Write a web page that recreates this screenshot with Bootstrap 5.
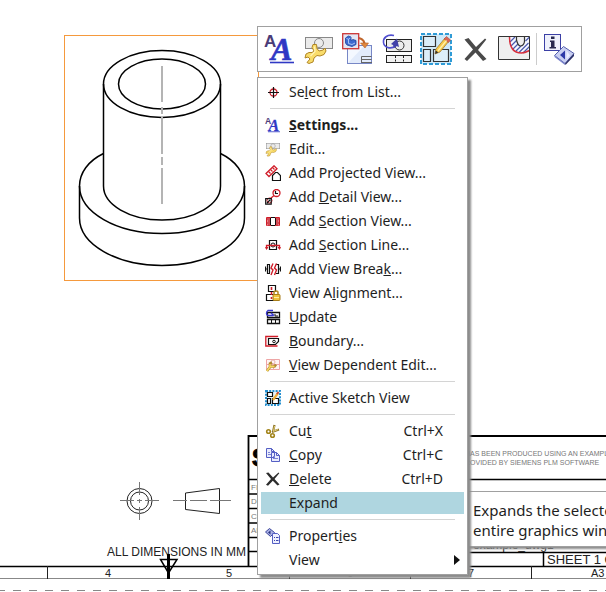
<!DOCTYPE html>
<html lang="en">
<head>
<meta charset="utf-8">
<meta name="viewport" content="width=device-width, initial-scale=1">
<title>Drafting – drawing sheet</title>
<link href="https://cdn.jsdelivr.net/npm/bootstrap@5.3.0/dist/css/bootstrap.min.css" rel="stylesheet">
<style>
  body { font-family: "Noto Sans", "Open Sans", sans-serif; font-size: 14px; line-height: 20px; color: #1e1e1e; background: #fff; }
  .sheet { font-family: "Liberation Sans", Arial, sans-serif; }
  .sheet text { fill: #222; }
  .sheet .faint { fill: #777; }
  /* floating view toolbar */
  .view-tools { left: 257px; top: 26px; padding: 6px; gap: 7px; border: 1px solid #a0a0a0; background: #fff; }
  .view-tools button { width: 32px; height: 32px; }
  .view-tools .vr { margin: 0 -1px; background: #ccc; opacity: 1; }
  /* context menu */
  .view-menu { left: 257px; top: 77px; min-width: 211px; padding: 3px; gap: 2px; font-size: 14px; color: #1e1e1e;
    border: 1px solid #a0a0a0; border-radius: 0; box-shadow: 3px 3px 2px #8c8c8c; }
  .view-menu .dropdown-item { padding: 1px 21px 1px 4px; gap: 8px; color: inherit; line-height: 20px; }
  .view-menu .dropdown-item:hover, .view-menu .dropdown-item.current { background: #afd6e0; color: inherit; }
  .view-menu .dropdown-divider { margin: 3px 9px; border-color: #d4d4d4; opacity: 1; }
  .view-menu .pic { width: 16px; height: 16px; flex: none; }
  .view-menu .has-sub { padding-right: 4px; }
  .hint { left: 465px; top: 491px; width: 210px; padding: 8px 7px 6px; font-size: 15px; border: 1px solid #a0a0a0; background: #fff; white-space: nowrap; box-shadow: 2px 2px 2px #8c8c8c; }
</style>
<script src="https://cdn.jsdelivr.net/npm/bootstrap@5.3.0/dist/js/bootstrap.bundle.min.js"></script>
</head>
<body>
<svg class="d-none" xmlns="http://www.w3.org/2000/svg">
  <defs>
  <symbol id="i-style" viewBox="0 0 32 32">
    <text x="0" y="14" font-family="Liberation Sans" font-weight="bold" font-size="17" fill="#4b3c78">A</text>
    <text x="7" y="27" font-family="Liberation Serif" font-weight="bold" font-style="italic" font-size="32" fill="#2f38c4" stroke="#2f38c4" stroke-width=".6">A</text>
    <path d="M6 29.500H30" stroke="#2f38c4" stroke-width="1.600"/>
  </symbol>
  <symbol id="i-wrench" viewBox="0 0 32 32">
    <rect x="2.500" y="4.500" width="27" height="11" fill="#ebebeb" stroke="#888"/>
    <circle cx="16" cy="10" r="4.500" fill="none" stroke="#888"/>
    <path d="M10 11.500l3.500 0 .5 4 2 2.500 4-1 2-2 1 3-2 3.500-4 1.500-3-.5-3 2.500-1 4-4 1.500-2-1 3-3.500-2-2-3 1 1-4 3-1.500 3 0 2-1.500-2-3.500z" fill="#f9dc6b" stroke="#b08524" stroke-linejoin="round"/>
    <path d="M11.500 13.500l.5 5-4.500 4.500" fill="none" stroke="#fff3b8" stroke-width="1.300"/>
  </symbol>
  <symbol id="i-base" viewBox="0 0 32 32">
    <rect x="5.500" y="12.500" width="24" height="18" fill="#e2ebfb" stroke="#7787c6"/>
    <path d="M6 30V13h16z" fill="#f4f8ff"/>
    <path d="M19.500 29.500V23.500h10M19.500 26.500h10M19 29.500h11" fill="none" stroke="#666"/>
    <path d="M17 5c4 1 6 3 5.500 8" fill="none" stroke="#c0662c" stroke-width="2.200"/>
    <path d="M18.500 10l8 0-3.500 5z" fill="#e0883e" stroke="#b5602a" stroke-width=".6"/>
    <rect x=".7" y=".7" width="16" height="15" fill="#e3e6f3" stroke="#cc3535" stroke-width="1.300"/>
    <path d="M3.500 5l3-2 2.500 1v3.500l2-1 3 1v4l-4 2-5-1.500-1.500-2z" fill="#3d6ad0" stroke="#20429a" stroke-width=".8"/>
    <path d="M4.500 5.500l2 .7 2-1.200M6.500 6v4.500l3.500 1 3-1.500" fill="none" stroke="#a9c2f4"/>
  </symbol>
  <symbol id="i-update" viewBox="0 0 32 32">
    <rect x="5.500" y="6.500" width="25" height="12" fill="#ececec" stroke="#222"/>
    <circle cx="18.500" cy="12.500" r="4.500" fill="none" stroke="#333"/>
    <rect x="5.500" y="22.500" width="25" height="7" fill="#f2f2f2" stroke="#222"/>
    <path d="M14.500 23v7M22.500 23v7" stroke="#222" stroke-dasharray="2 1.500"/>
    <path d="M13 2.500C6 1 2 5 2.500 9.500S9 17 15 13" fill="none" stroke="#504fd0" stroke-width="1.600"/>
    <path d="M10 11l6-5.500 2 8.500-2.500-1-2.500 2-1-3z" fill="#4140a8"/>
  </symbol>
  <symbol id="i-pencil" viewBox="0 0 32 32">
    <path d="M15 21l1-5 9-11 4 3-9 11z" fill="#f7c948" stroke="#a37c32" stroke-width=".8"/>
    <path d="M24 6l2.500-2.500 4 3.500-2 2.500z" fill="#dd6655" stroke="#a94a3d" stroke-width=".6"/>
    <path d="M18 18l8.500-10.500" stroke="#fff0ac" stroke-width="1.300"/>
    <path d="M15 21l.8-3.500 2.500 2z" fill="#333"/>
  </symbol>
  <symbol id="i-sketch" viewBox="0 0 32 32">
    <rect x="1" y="1" width="30" height="30" fill="#cfe9f8" stroke="#2f9bd6" stroke-width="2" stroke-dasharray="4 2"/>
    <path d="M3.500 3.500h12v10h-12zM3.500 16.500h7v12h-7zM13.500 16.500h15v12h-15z" fill="#dceef9" stroke="#333" stroke-width="1.200"/>
    <use href="#i-pencil"/>
  </symbol>
  <symbol id="i-cross" viewBox="0 0 32 32">
    <path d="M5.500 6.500l4-1.500 7.500 9 9-8.500 1.300 1-8.300 10.500L27.500 26l-3.500 2-7.500-8.500-8.500 8.500L5.500 26l8.500-9.500z" fill="#4a4a4a"/>
  </symbol>
  <symbol id="i-breakout" viewBox="0 0 32 32">
    <path d="M.5 3.500h31v23H.5z" fill="#efefef"/>
    <path d="M11.500 4c0 10 4 16 12 16 3 0 5-1 8-2.500V4h-4v4c0 3-2 5-5 5s-5-4-5-9z" fill="#f6f7ff"/>
    <path d="M12 9l5-5M13 13l6-6M15 16l5-5M18 18l5-5M21 19.500l9.500-9.500M25 20l6.500-6.500M27.500 8l4-4" stroke="#4a5aac" stroke-width="1.200"/>
    <path d="M11.500 4c0 10 4 16 12 16 3 0 5-1 8-2.500" fill="none" stroke="#d62f3c" stroke-width="1.500"/>
    <path d="M18.500 4v3c1 4 2 6 4 6s4-2 4-5V4" fill="#efefef" stroke="#333" stroke-width="1.200"/>
    <path d="M.5 3.500h31v23H.5z" fill="none" stroke="#333"/>
  </symbol>
  <symbol id="i-info" viewBox="0 0 32 32">
    <rect x="1.500" y="1.500" width="16" height="16" fill="#eef0fb" stroke="#3b3fa5"/>
    <path d="M7 7.500h4.500V14H13v1.500H6.500V14H8V9H7zM8 3.500h3.500v2.500H8z" fill="#28284e"/>
    <path d="M11.500 22.500l9-9 10.500 7-9 10z" fill="#c9cff2" stroke="#5560ad"/>
    <path d="M22 30.500l9-10v2.500l-8.500 9z" fill="#2c3168"/>
    <path d="M11.500 22.500l10.500 8v1.500L11.500 24z" fill="#7a83cc"/>
    <path d="M22 17.500v9l-5-4.500z" fill="#2c38a8"/>
    <path d="M23.500 17.500v9l3.500-4z" fill="#e9ecff"/>
  </symbol>
  </defs>
</svg>

<main class="position-relative min-vh-100 overflow-hidden">
  <svg class="sheet position-absolute top-0 start-0 w-100 h-100" xmlns="http://www.w3.org/2000/svg" role="img" aria-label="Drawing sheet">
    <rect x="64.500" y="35.500" width="194" height="245" fill="none" stroke="#f5993d"/>
    <g fill="none" stroke="#000" stroke-width="1.500">
      <ellipse cx="162" cy="84" rx="58.500" ry="33.500"/>
      <ellipse cx="162" cy="84" rx="43.500" ry="25"/>
      <path d="M103.500 84V186A58.500 34 0 0 0 220.500 186V84"/>
      <path d="M103.500 153.500C88 161 79.500 173 79.500 186A82.500 47.500 0 0 0 244.500 186C244.500 173 236 161 220.500 153.500"/>
      <path d="M79.500 186V218A82.500 47.500 0 0 0 244.500 218V186"/>
    </g>
    <path d="M162 66V102M162 107V114M162 117V154M162 157V165M162 168V204" stroke="#b4b4b4" stroke-width="2"/>
    <!-- projection symbol -->
    <g fill="none" stroke="#222">
      <circle cx="139.500" cy="501" r="12.500"/>
      <circle cx="139.500" cy="501" r="9"/>
      <path d="M185.500 493L219.500 488.500V513.500L185.500 509.500Z"/>
      <path d="M120 500.500H134M137 500.500H142M145 500.500H159M139.500 482V495M139.500 499V503M139.500 507V520M173 500.500H187M190 500.500H207M210 500.500H231" stroke="#777"/>
    </g>
    <text x="107" y="556" font-size="12">ALL DIMENSIONS IN MM</text>
    <!-- sheet frame -->
    <line x1="0" x2="100%" y1="566.500" y2="566.500" stroke="#000" stroke-width="1.600"/>
    <line x1="0" x2="100%" y1="578.500" y2="578.500" stroke="#888"/>
    <line x1="-3" x2="100%" y1="590.500" y2="590.500" stroke="#888" stroke-dasharray="8 8"/>
    <path d="M47.500 566V579M289.500 566V579M410.500 566V579M531.500 566V579" stroke="#222"/>
    <path d="M168.500 554V579" stroke="#000" stroke-width="3"/>
    <path d="M160.500 559.500H177L168.500 573Z" fill="none" stroke="#000" stroke-width="1.500"/>
    <g font-size="11">
      <text x="105" y="577">4</text><text x="226" y="577">5</text><text x="347" y="577">6</text><text x="468" y="577">7</text><text x="591" y="577">A3</text>
    </g>
    <!-- title block -->
    <path d="M248.500 567V436H606" fill="none" stroke="#000" stroke-width="1.800"/>
    <path d="M248 479.500H606M248 494H300M248 508.500H300M248 523H300M248 537.500H300M248 551.500H300M400 552.500H606M543.500 552V567" stroke="#000" stroke-width="1.500"/>
    <text x="252" y="466" font-size="23" font-weight="bold" stroke="#000" style="fill:#000">S</text>
    <g font-size="8">
      <text class="faint" x="251" y="490">FI</text><text class="faint" x="251" y="504">DR</text><text class="faint" x="251" y="519">CH</text><text class="faint" x="251" y="533">AP</text>
    </g>
    <g font-size="7">
      <text class="faint" x="465" y="456">HAS BEEN PRODUCED USING AN EXAMPLE</text>
      <text class="faint" x="465" y="465">ROVIDED BY SIEMENS PLM SOFTWARE</text>
    </g>
    <text x="473" y="549" font-size="12">example_dwg1</text>
    <text x="547" y="564" font-size="13">SHEET 1 OF</text>
  </svg>

  <div class="view-tools position-absolute d-flex align-items-stretch" role="toolbar" aria-label="View">
    <button type="button" class="btn p-0 border-0 d-flex" aria-label="Settings"><svg width="32" height="32"><use href="#i-style"/></svg></button>
    <button type="button" class="btn p-0 border-0 d-flex" aria-label="Edit"><svg width="32" height="32"><use href="#i-wrench"/></svg></button>
    <button type="button" class="btn p-0 border-0 d-flex" aria-label="Base view"><svg width="32" height="32"><use href="#i-base"/></svg></button>
    <button type="button" class="btn p-0 border-0 d-flex" aria-label="Update"><svg width="32" height="32"><use href="#i-update"/></svg></button>
    <button type="button" class="btn p-0 border-0 d-flex" aria-label="Active sketch view"><svg width="32" height="32"><use href="#i-sketch"/></svg></button>
    <button type="button" class="btn p-0 border-0 d-flex" aria-label="Delete"><svg width="32" height="32"><use href="#i-cross"/></svg></button>
    <button type="button" class="btn p-0 border-0 d-flex" aria-label="Break-out section"><svg width="32" height="32"><use href="#i-breakout"/></svg></button>
    <div class="vr"></div>
    <button type="button" class="btn p-0 border-0 d-flex" aria-label="Information"><svg width="32" height="32"><use href="#i-info"/></svg></button>
  </div>

  <div class="view-menu dropdown-menu show d-flex flex-column">
    <button type="button" class="dropdown-item d-flex align-items-center"><svg class="pic"><circle cx="8.500" cy="8.500" r="3.500" fill="none" stroke="#c8202c" stroke-width="1.300"/><path d="M3 8.500H14M8.500 3V14" stroke="#111" stroke-width="1.200"/></svg><span>Se<u>l</u>ect from List...</span></button>
    <hr class="dropdown-divider">
    <button type="button" class="dropdown-item d-flex align-items-center fw-bold"><svg class="pic"><use href="#i-style"/></svg><span><u>S</u>ettings...</span></button>
    <button type="button" class="dropdown-item d-flex align-items-center"><svg class="pic"><use href="#i-wrench"/></svg><span>Edit...</span></button>
    <button type="button" class="dropdown-item d-flex align-items-center"><svg class="pic" fill="none"><path d="M1 8.500L9 .8l3 3L4 11.500z" fill="#fff" stroke="#d01c28" stroke-width="1.300"/><path d="M3.500 6.500l2 2M5.500 4.500l2 2M7.500 2.500l2 2" stroke="#d01c28" stroke-width="1.200"/><path d="M7.500 15.500v-5l3-3h2l3 3v5z" fill="#fff" stroke="#111" stroke-width="1.200"/></svg><span>Add Pro<u>j</u>ected View...</span></button>
    <button type="button" class="dropdown-item d-flex align-items-center"><svg class="pic" fill="none"><circle cx="11.500" cy="4" r="3.500" stroke="#d01c28" stroke-width="1.300"/><circle cx="4.500" cy="11.500" r="2.500" stroke="#d01c28"/><path d="M5.500 9.500L9 6.500" stroke="#d01c28" stroke-width="1.300"/><path d="M10.500 2v2.500H13M.7 9.700h5.500v5.500H.7zM2 14l3-3" stroke="#111" stroke-width="1.200"/></svg><span>Add <u>D</u>etail View...</span></button>
    <button type="button" class="dropdown-item d-flex align-items-center"><svg class="pic" fill="none"><path d="M1.500 4.500h13v8h-13z" fill="#fff" stroke="#d01c28"/><path d="M2 5h3.500v7.500H2zM10.500 5H14v7.500h-3.500z" fill="#e98088"/><path d="M2 6h3M3 8h3M2 10h3M3 12h3M11 6h3M10 8h3M11 10h3M10 12h3" stroke="#b81420"/><path d="M6 4.500h4M6 12.500h4M5.500 5v7M10.500 5v7" stroke="#111"/></svg><span>Add <u>S</u>ection View...</span></button>
    <button type="button" class="dropdown-item d-flex align-items-center"><svg class="pic" fill="none"><path d="M4.500 3.500h7v9h-7z" stroke="#111" stroke-width="1.200"/><circle cx="8" cy="8" r="2" stroke="#111"/><path d="M1.500 12V8.500H14.500V12" stroke="#d01c28" stroke-width="1.300"/><path d="M0 10h3.500L1.500 13zM12.500 10H16L14.500 13z" fill="#d01c28"/></svg><span>Add <u>S</u>ection Line...</span></button>
    <button type="button" class="dropdown-item d-flex align-items-center"><svg class="pic" fill="none"><path d="M5 3.500H2.500v9H5M11 3.500h2.500v9H11M.5 5.500v5M15.500 5.500v5M4.500 4v8M0 8h2M14 8h2" stroke="#111" stroke-width="1.200"/><path d="M8 2.500L6 7l2 2-2 5M11.500 2.500L9.500 7l2 2-2 5" stroke="#d01c28" stroke-width="1.400"/></svg><span>Add View Brea<u>k</u>...</span></button>
    <button type="button" class="dropdown-item d-flex align-items-center"><svg class="pic" fill="none"><path d="M3.500.5h7v6h-7zM1.500 9.500h8v6h-8z" fill="#fff" stroke="#111" stroke-width="1.200"/><path d="M6.500 2v12" stroke="#d01c28" stroke-width="1.600" stroke-dasharray="3 2"/><path d="M9 10V7.500c0-2 4-2 4 0V10" stroke="#b58a20" stroke-width="1.500"/><rect x="8" y="9.500" width="7" height="6" rx="1" fill="#f0c33c" stroke="#a87d18"/><path d="M9 12.500h5" stroke="#fff0a5"/></svg><span>View A<u>l</u>ignment...</span></button>
    <button type="button" class="dropdown-item d-flex align-items-center"><svg class="pic" fill="none"><path d="M2.500 3.500h12v5h-12zM2.500 10.500h12v4h-12z" fill="#fff" stroke="#111" stroke-width="1.300"/><path d="M6.500 11v3M10.500 11v3" stroke="#111"/><path d="M8 1.500H3C1 3 1 6 3 6.500h5M6 4l3 2.500" stroke="#3938cf" stroke-width="1.400"/><path d="M10 5v2h3" stroke="#111"/></svg><span><u>U</u>pdate</span></button>
    <button type="button" class="dropdown-item d-flex align-items-center"><svg class="pic" fill="none"><path d="M12.500 4V3.500H.8v9.500h11.700" stroke="#d01c28" stroke-width="1.300"/><path d="M3.500 5.500h10v3l-3 3h-7z" stroke="#111" stroke-width="1.200"/><circle cx="9" cy="8.500" r="1.300" stroke="#111"/></svg><span><u>B</u>oundary...</span></button>
    <button type="button" class="dropdown-item d-flex align-items-center"><svg class="pic" fill="none"><path d="M1.500 2.500h13v10h-13zM1.500 7.500h13M8.500 7.500v5" fill="#fff4f4" stroke="#eea5a5"/><circle cx="8" cy="5" r="2" stroke="#e8b0b0"/><path d="M2 14l3-4V6.500l2-1M5.500 9.500l4 0 1.500-2" stroke="#b08a30" stroke-width="2.600"/><path d="M2 14l3-4V7M5.500 9.500l4 0" stroke="#f6d860" stroke-width="1.500"/></svg><span><u>V</u>iew Dependent Edit...</span></button>
    <hr class="dropdown-divider">
    <button type="button" class="dropdown-item d-flex align-items-center"><svg class="pic" fill="none"><rect x="1" y="1" width="14" height="14" fill="#e4f3fb" stroke="#2490d0" stroke-width="2" stroke-dasharray="2 1.200"/><path d="M2.500 2.500h5v4h-5zM2.500 8.500h3v5h-3zM7.500 8.500h6v5h-6z" fill="#fff" stroke="#111" stroke-width="1.200"/><path d="M8 10l5-7" stroke="#efae3a" stroke-width="2.200"/><path d="M12 4l1.500-2" stroke="#c8483c" stroke-width="2"/></svg><span>Active Sketch View</span></button>
    <hr class="dropdown-divider">
    <button type="button" class="dropdown-item d-flex align-items-center"><svg class="pic" fill="none"><path d="M8 9l1.500-7M7 9l7-2.500" stroke="#8d7426" stroke-width="2.200"/><path d="M8.500 8l1-5M8 8.500l5-2" stroke="#e3cf7a"/><circle cx="3.500" cy="8.500" r="1.800" stroke="#a3851d" stroke-width="1.600"/><circle cx="7.500" cy="12.500" r="1.800" stroke="#a3851d" stroke-width="1.600"/></svg><span class="me-auto">Cu<u>t</u></span><span>Ctrl+X</span></button>
    <button type="button" class="dropdown-item d-flex align-items-center"><svg class="pic"><path d="M1.500 1.500h5l3 3v6h-8zM6.500 5.500h5l3 3v6h-8z" fill="#e9ecfd" stroke="#545fc4"/><path d="M6.500 1.500v3h3M11.500 5.500v3h3" fill="none" stroke="#545fc4"/><path d="M3 5.500h2M3 7.500h3M8 9.500h2M8 11.500h5" stroke="#7b84d6"/></svg><span class="me-auto"><u>C</u>opy</span><span>Ctrl+C</span></button>
    <button type="button" class="dropdown-item d-flex align-items-center"><svg class="pic"><path d="M1 2l2.500-.5L8 6.500 13.500 1.500l.8.8L9.500 8l5 5.500-2 1L7.800 9.800 3 14.800l-2-1L6 8z" fill="#2c2c2c"/></svg><span class="me-auto"><u>D</u>elete</span><span>Ctrl+D</span></button>
    <button type="button" class="dropdown-item d-flex align-items-center current"><span class="pic"></span><span>Expand</span></button>
    <hr class="dropdown-divider">
    <button type="button" class="dropdown-item d-flex align-items-center"><svg class="pic"><path d="M.5 4L4.500.5l5 4-4 4z" fill="#aab1e5" stroke="#3c469c"/><path d="M5.500 2.500v4L3 4.500z" fill="#26307e"/><path d="M7.500 5.500h5l2 2v8h-7z" fill="#eef0ff" stroke="#545fc4"/><path d="M9 9.500h1M11 9.500h2.500M9 12.500h1M11 12.500h2.500" stroke="#3c46ac" stroke-width="1.200"/></svg><span>Propert<u>i</u>es</span></button>
    <button type="button" class="dropdown-item d-flex align-items-center has-sub"><span class="pic"></span><span class="me-auto">View</span><svg width="6" height="10"><path d="M0 0V10L6 5z" fill="#111"/></svg></button>
  </div>

  <div class="hint position-absolute" role="tooltip">Expands the selected view to the<br>entire graphics window</div>
</main>
</body>
</html>
